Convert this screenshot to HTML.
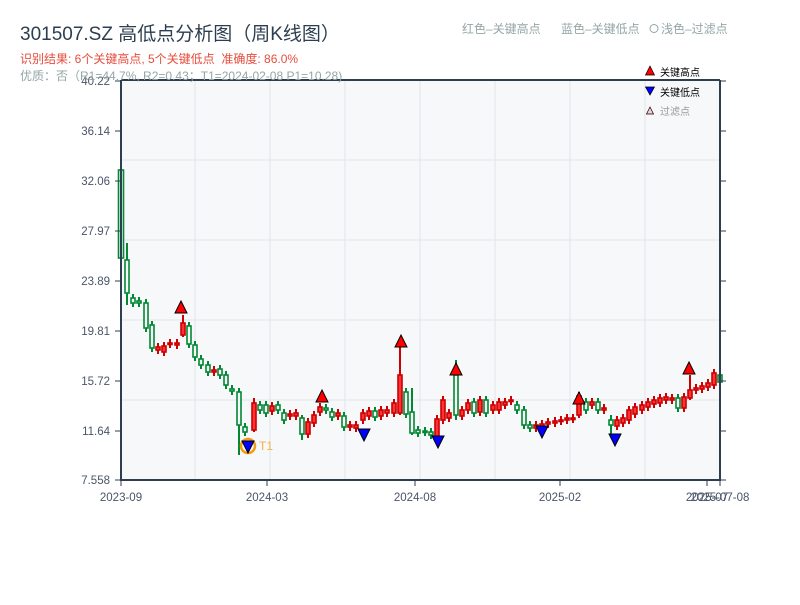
<!DOCTYPE html>
<html><head><meta charset="utf-8"><style>
body{margin:0;background:#fff;width:800px;height:600px;overflow:hidden;font-family:"Liberation Sans","Noto Sans CJK SC",sans-serif;}
</style></head><body>
<svg id="s" width="800" height="600" xmlns="http://www.w3.org/2000/svg" font-family="Liberation Sans, Noto Sans CJK SC, sans-serif">
<rect x="121" y="80" width="599" height="400" fill="#f6f8fa"/>
<g stroke="#e1e4ea" stroke-width="1">
<line x1="121" y1="160" x2="720" y2="160"/><line x1="121" y1="240" x2="720" y2="240"/>
<line x1="121" y1="320" x2="720" y2="320"/><line x1="121" y1="400" x2="720" y2="400"/>
<line x1="195" y1="80" x2="195" y2="480"/><line x1="270" y1="80" x2="270" y2="480"/>
<line x1="345" y1="80" x2="345" y2="480"/><line x1="420" y1="80" x2="420" y2="480"/>
<line x1="495" y1="80" x2="495" y2="480"/><line x1="570" y1="80" x2="570" y2="480"/>
<line x1="645" y1="80" x2="645" y2="480"/>
</g>
<g id="c"></g>
<g stroke="#2c3e50" stroke-width="2" fill="none">
<line x1="121" y1="80" x2="121" y2="481"/><line x1="120" y1="480" x2="721" y2="480"/>
<line x1="720" y1="80" x2="720" y2="481"/><line x1="121" y1="80" x2="720" y2="80"/>
</g>
<g stroke="#2c3e50" stroke-width="1">
<line x1="115" y1="81" x2="121" y2="81"/><line x1="115" y1="131" x2="121" y2="131"/><line x1="115" y1="181" x2="121" y2="181"/>
<line x1="115" y1="231" x2="121" y2="231"/><line x1="115" y1="281" x2="121" y2="281"/><line x1="115" y1="331" x2="121" y2="331"/>
<line x1="115" y1="381" x2="121" y2="381"/><line x1="115" y1="431" x2="121" y2="431"/><line x1="115" y1="480" x2="121" y2="480"/>
<line x1="720" y1="81" x2="726" y2="81"/><line x1="720" y1="131" x2="726" y2="131"/><line x1="720" y1="181" x2="726" y2="181"/>
<line x1="720" y1="231" x2="726" y2="231"/><line x1="720" y1="281" x2="726" y2="281"/><line x1="720" y1="331" x2="726" y2="331"/>
<line x1="720" y1="381" x2="726" y2="381"/><line x1="720" y1="431" x2="726" y2="431"/><line x1="720" y1="480" x2="726" y2="480"/>
<line x1="121" y1="480" x2="121" y2="486"/><line x1="267" y1="480" x2="267" y2="486"/><line x1="415" y1="480" x2="415" y2="486"/>
<line x1="560" y1="480" x2="560" y2="486"/><line x1="707" y1="480" x2="707" y2="486"/><line x1="720" y1="480" x2="720" y2="486"/>
</g>
<g font-size="11.5" fill="#4a5568" text-anchor="end">
<text x="110" y="85">40.22</text><text x="110" y="135">36.14</text><text x="110" y="185">32.06</text>
<text x="110" y="235">27.97</text><text x="110" y="285">23.89</text><text x="110" y="335">19.81</text>
<text x="110" y="385">15.72</text><text x="110" y="435">11.64</text><text x="110" y="484">7.558</text>
</g>
<g font-size="11.5" fill="#4a5568" text-anchor="middle">
<text x="121" y="501">2023-09</text><text x="267" y="501">2024-03</text><text x="415" y="501">2024-08</text>
<text x="560" y="501">2025-02</text><text x="707" y="501">2025-07</text><text x="720" y="501">2025-07-08</text>
</g>
<g id="m"></g>
<text x="20" y="40" font-size="19" fill="#2c3e50">301507.SZ 高低点分析图（周K线图）</text>
<text x="20" y="63" font-size="12" fill="#e74c3c" xml:space="preserve">识别结果: 6个关键高点, 5个关键低点  准确度: 86.0%</text>
<text x="20" y="80" font-size="12" fill="#95a5a6">优质：否（R1=44.7%, R2=0.43；T1=2024-02-08 P1=10.28)</text>
<text x="462" y="33" font-size="12" fill="#95a5a6">红色–关键高点</text>
<text x="561" y="33" font-size="12" fill="#95a5a6">蓝色–关键低点</text>
<circle cx="654" cy="28.5" r="4" fill="none" stroke="#95a5a6"/>
<text x="661" y="33" font-size="12" fill="#95a5a6">浅色–过滤点</text>
<polygon points="650,66 654.5,75 645.5,75" fill="red" stroke="#000" stroke-width="0.7"/>
<text x="660" y="76" font-size="10" fill="#000">关键高点</text>
<polygon points="645.5,87 654.5,87 650,95" fill="blue" stroke="#000" stroke-width="0.7"/>
<text x="660" y="96" font-size="10" fill="#000">关键低点</text>
<polygon points="650,107 653.5,114 646.5,114" fill="#ffcccc" stroke="#000" stroke-width="0.7"/>
<text x="660" y="115" font-size="10" fill="#999">过滤点</text>
</svg>
<script>
var cl=[[121,170,258],[127,260,293],[133,298,303],[139,301,303],[146,303,328],[152,325,348],[158,350,347],[164,352,346],[170,344,343],[177,345,343],[183,335,323],[189,326,344],[195,345,357],[201,359,365],[208,365,372],[214,372,370],[220,369,375],[226,375,385],[232,389,391],[239,392,425],[245,427,432],[254,430,403],[260,405,410],[266,405,413],[272,411,406],[278,405,410],[284,413,420],[290,416,414],[296,416,413],[302,418,434],[308,434,422],[314,423,415],[320,412,407],[326,408,410],[332,412,417],[338,416,413],[344,416,427],[350,427,425],[356,428,425],[363,420,413],[369,416,411],[375,411,417],[381,416,410],[387,413,410],[394,413,403],[400,413,375],[406,392,414],[412,412,433],[418,430,433],[425,431,432],[431,432,435],[437,439,419],[443,420,400],[449,418,413],[456,375,415],[462,416,410],[468,410,403],[474,402,413],[480,412,400],[486,400,413],[493,410,405],[499,410,402],[505,405,402],[511,401,400],[517,405,410],[524,410,425],[530,425,428],[536,428,425],[542,428,424],[548,424,422],[555,423,421],[561,421,420],[567,420,418],[573,419,418],[579,415,396],[586,402,410],[592,405,402],[598,402,410],[604,410,408],[611,420,425],[617,426,420],[623,423,418],[629,420,410],[635,414,407],[642,410,405],[648,407,402],[654,404,400],[660,403,398],[666,400,397],[672,400,398],[678,398,408],[684,408,397],[690,398,390],[696,390,388],[702,389,386],[708,387,383],[714,385,373],[720,375,382]];
var big={400:[341,415],456:[360,420],183:[315,337],127:[243,305],239:[388,455],254:[398,432],579:[392,418],690:[375,400],611:[415,435],302:[415,440],412:[388,435]};
var h='';
cl.forEach(function(c){var x=c[0],o=c[1],k=c[2];var up=k<o;var t=Math.min(o,k),b=Math.max(o,k);var hi=t-4,lo=b+4;if(big[x]){hi=big[x][0];lo=big[x][1];}
var col=up?'#cc0000':'#008833';
h+='<line x1="'+x+'" y1="'+hi+'" x2="'+x+'" y2="'+lo+'" stroke="'+col+'" stroke-width="2"/>';
var w=x==121?5:4;
h+='<rect x="'+(x-w/2)+'" y="'+t+'" width="'+w+'" height="'+Math.max(b-t,1.5)+'" fill="'+(up?'#ff3333':'#f6f8fa')+'" stroke="'+col+'" stroke-width="1.6"/>';});
document.getElementById('c').innerHTML=h;
var m='';
[[181,308],[322,397],[401,342],[456,370],[579,399],[689,369]].forEach(function(p){m+='<polygon points="'+p[0]+','+(p[1]-7)+' '+(p[0]+6)+','+(p[1]+5)+' '+(p[0]-6)+','+(p[1]+5)+'" fill="red" stroke="#000" stroke-width="1"/>';});
m+='<circle cx="248" cy="446" r="7" fill="none" stroke="#f39c12" stroke-width="2.5"/><text x="259" y="450" font-size="12" fill="#f5b041">T1</text>';
[[248,447],[364,435],[438,442],[542,432],[615,440]].forEach(function(p){m+='<polygon points="'+(p[0]-6)+','+(p[1]-6)+' '+(p[0]+6)+','+(p[1]-6)+' '+p[0]+','+(p[1]+6)+'" fill="blue" stroke="#000" stroke-width="1"/>';});
document.getElementById('m').innerHTML=m;
</script>
</body></html>
